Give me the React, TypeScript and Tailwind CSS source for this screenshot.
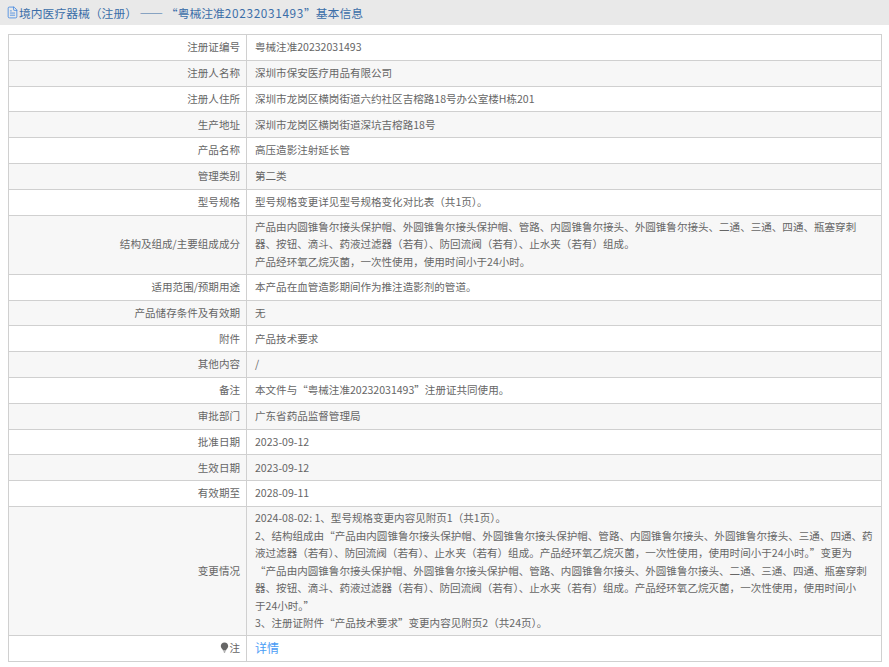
import React from 'react';
import { FileText } from 'lucide-react';

interface RowItem {
  label: string;
  value: React.ReactNode;
}

const rows: RowItem[] = [
  { label: '注册证编号', value: '粤械注准20232031493' },
  { label: '注册人名称', value: '深圳市保安医疗用品有限公司' },
  { label: '注册人住所', value: '深圳市龙岗区横岗街道六约社区吉榕路18号办公室楼H栋201' },
  { label: '生产地址', value: '深圳市龙岗区横岗街道深坑吉榕路18号' },
  { label: '产品名称', value: '高压造影注射延长管' },
  { label: '管理类别', value: '第二类' },
  { label: '型号规格', value: '型号规格变更详见型号规格变化对比表（共1页）。' },
  {
    label: '结构及组成/主要组成成分',
    value: (
      <>
        产品由内圆锥鲁尔接头保护帽、外圆锥鲁尔接头保护帽、管路、内圆锥鲁尔接头、外圆锥鲁尔接头、二通、三通、四通、瓶塞穿刺器、按钮、滴斗、药液过滤器（若有）、防回流阀（若有）、止水夹（若有）组成。
        <br />
        产品经环氧乙烷灭菌，一次性使用，使用时间小于24小时。
      </>
    ),
  },
  { label: '适用范围/预期用途', value: '本产品在血管造影期间作为推注造影剂的管道。' },
  { label: '产品储存条件及有效期', value: '无' },
  { label: '附件', value: '产品技术要求' },
  { label: '其他内容', value: '/' },
  { label: '备注', value: '本文件与“粤械注准20232031493”注册证共同使用。' },
  { label: '审批部门', value: '广东省药品监督管理局' },
  { label: '批准日期', value: '2023-09-12' },
  { label: '生效日期', value: '2023-09-12' },
  { label: '有效期至', value: '2028-09-11' },
  {
    label: '变更情况',
    value: (
      <>
        2024-08-02: 1、型号规格变更内容见附页1（共1页）。
        <br />
        2、结构组成由“产品由内圆锥鲁尔接头保护帽、外圆锥鲁尔接头保护帽、管路、内圆锥鲁尔接头、外圆锥鲁尔接头、三通、四通、药液过滤器（若有）、防回流阀（若有）、止水夹（若有）组成。产品经环氧乙烷灭菌，一次性使用，使用时间小于24小时。”变更为
        <br />
        “产品由内圆锥鲁尔接头保护帽、外圆锥鲁尔接头保护帽、管路、内圆锥鲁尔接头、外圆锥鲁尔接头、二通、三通、四通、瓶塞穿刺器、按钮、滴斗、药液过滤器（若有）、防回流阀（若有）、止水夹（若有）组成。产品经环氧乙烷灭菌，一次性使用，使用时间小
        <br />
        于24小时。”
        <br />
        3、注册证附件“产品技术要求”变更内容见附页2（共24页）。
      </>
    ),
  },
  {
    label: '注',
    value: <a className="text-[12px] text-[#4a9cf5]">详情</a>,
  },
];

const App: React.FC = () => {
  return (
    <div lang="zh-CN" className="w-[889px] h-[667px] overflow-hidden bg-white text-[10.55px] leading-[17.4px] text-[#666] font-['Noto_Sans_CJK_SC','Liberation_Sans',sans-serif]">
      <div className="flex items-center h-[25px] pl-[6px] bg-[#e9e9e9] text-[11.8px] text-[#3b6ea8]">
        <FileText size={13} strokeWidth={1.5} className="text-[#3d85e0]" />
        <span>
          境内医疗器械（注册） —— “粤械注准<span className="tracking-[0.65px]">20232031493</span>”基本信息
        </span>
      </div>
      <table className="mt-[9px] ml-[8px] w-[874px] table-fixed border-collapse">
        <tbody>
          {rows.map((row, i) => (
            <tr key={row.label} className={i % 2 === 1 ? 'bg-[#f7f7f7]' : 'bg-white'}>
              <td className={`w-[238px] ${row.label === '注' ? 'h-[26.6px]' : 'h-[25.8px]'} pt-[2.5px] pb-[3.5px] pl-[6px] pr-[6px] text-right border border-[#d0d0d0]`}>
                {row.label === '注' ? (
                  <span className="inline-flex items-center justify-end">
                    <svg width="9" height="11" viewBox="0 0 9 11" className="text-[#666]">
                      <path d="M4.5 0.5C2.3 0.5 0.8 2.1 0.8 4C0.8 5.5 1.8 6.4 2.6 7.6L3 8.6H6L6.4 7.6C7.2 6.4 8.2 5.5 8.2 4C8.2 2.1 6.7 0.5 4.5 0.5Z" fill="currentColor" />
                      <path d="M3.4 9.4H5.6L5 10.6H4Z" fill="currentColor" />
                    </svg>
                    注
                  </span>
                ) : (
                  row.label
                )}
              </td>
              <td className="pt-[2.5px] pb-[3.5px] pl-[8px] pr-[8px] border border-[#d0d0d0]">{row.value}</td>
            </tr>
          ))}
        </tbody>
      </table>
    </div>
  );
};

export default App;
